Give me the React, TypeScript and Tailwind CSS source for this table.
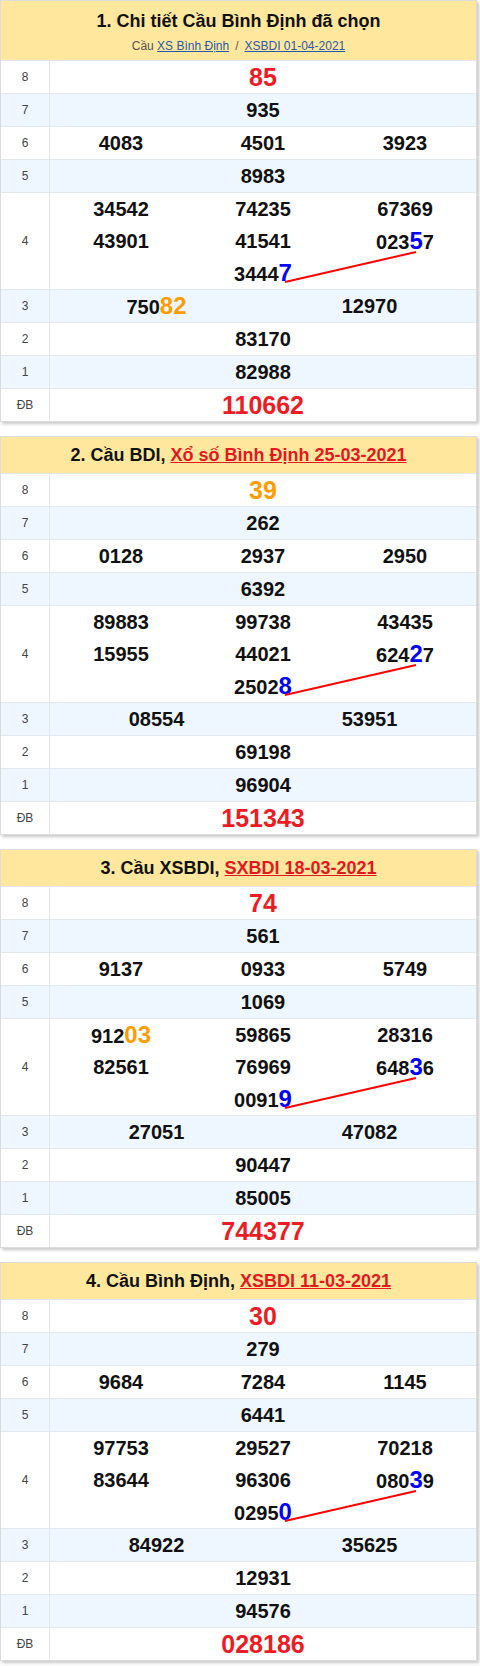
import React from 'react';

type Num = { v: string; hs?: number; he?: number; c?: 'r' | 'o' | 'b' };
type Row = { label: string; nums: Num[]; cols: number; alt?: boolean };
type Card = {
  title: string;
  link?: string;
  sub?: boolean;
  rows: Row[];
};

const colors = {
  r: 'text-[#ed1c24]',
  o: 'text-[#ff9c00]',
  b: 'text-[#0000ff]',
};

const n = (v: string): Num => ({ v });
const big = (v: string, c: 'r' | 'o'): Num => ({ v, c });
const hi = (v: string, hs: number, he: number, c: 'o' | 'b'): Num => ({ v, hs, he, c });

function makeRows(
  g8: Num,
  g7: string,
  g6: string[],
  g5: string,
  g4: Num[],
  g3: Num[],
  g2: string,
  g1: string,
  db: string
): Row[] {
  return [
    { label: '8', nums: [g8], cols: 1 },
    { label: '7', nums: [n(g7)], cols: 1, alt: true },
    { label: '6', nums: g6.map(n), cols: 3 },
    { label: '5', nums: [n(g5)], cols: 1, alt: true },
    { label: '4', nums: g4, cols: 3 },
    { label: '3', nums: g3, cols: 2, alt: true },
    { label: '2', nums: [n(g2)], cols: 1 },
    { label: '1', nums: [n(g1)], cols: 1, alt: true },
    { label: 'ĐB', nums: [big(db, 'r')], cols: 1 },
  ];
}

const cards: Card[] = [
  {
    title: '1. Chi tiết Cầu Bình Định đã chọn',
    sub: true,
    rows: makeRows(
      big('85', 'r'),
      '935',
      ['4083', '4501', '3923'],
      '8983',
      [n('34542'), n('74235'), n('67369'), n('43901'), n('41541'), hi('02357', 3, 4, 'b'), n(''), hi('34447', 4, 5, 'b'), n('')],
      [hi('75082', 3, 5, 'o'), n('12970')],
      '83170',
      '82988',
      '110662'
    ),
  },
  {
    title: '2. Cầu BDI, ',
    link: 'Xổ số Bình Định 25-03-2021',
    rows: makeRows(
      big('39', 'o'),
      '262',
      ['0128', '2937', '2950'],
      '6392',
      [n('89883'), n('99738'), n('43435'), n('15955'), n('44021'), hi('62427', 3, 4, 'b'), n(''), hi('25028', 4, 5, 'b'), n('')],
      [n('08554'), n('53951')],
      '69198',
      '96904',
      '151343'
    ),
  },
  {
    title: '3. Cầu XSBDI, ',
    link: 'SXBDI 18-03-2021',
    rows: makeRows(
      big('74', 'r'),
      '561',
      ['9137', '0933', '5749'],
      '1069',
      [hi('91203', 3, 5, 'o'), n('59865'), n('28316'), n('82561'), n('76969'), hi('64836', 3, 4, 'b'), n(''), hi('00919', 4, 5, 'b'), n('')],
      [n('27051'), n('47082')],
      '90447',
      '85005',
      '744377'
    ),
  },
  {
    title: '4. Cầu Bình Định, ',
    link: 'XSBDI 11-03-2021',
    rows: makeRows(
      big('30', 'r'),
      '279',
      ['9684', '7284', '1145'],
      '6441',
      [n('97753'), n('29527'), n('70218'), n('83644'), n('96306'), hi('08039', 3, 4, 'b'), n(''), hi('02950', 4, 5, 'b'), n('')],
      [n('84922'), n('35625')],
      '12931',
      '94576',
      '028186'
    ),
  },
];

function NumText({ num }: { num: Num }) {
  if (!num.c) return <span>{num.v}</span>;
  if (num.hs === undefined) {
    return <span className={`text-[25px] ${colors[num.c]}`}>{num.v}</span>;
  }
  return (
    <span>
      {num.v.slice(0, num.hs)}
      <span className={`text-[24px] ${colors[num.c]}`}>{num.v.slice(num.hs, num.he)}</span>
      {num.v.slice(num.he)}
    </span>
  );
}

function ResultRow({ row }: { row: Row }) {
  const grid = row.cols === 3 ? 'grid-cols-3' : row.cols === 2 ? 'grid-cols-2' : 'grid-cols-1';
  return (
    <div className={`flex border-t border-[#e3e8ee] ${row.alt ? 'bg-[#eef6ff]' : 'bg-white'}`}>
      <div className="w-[49px] shrink-0 border-r border-[#e3e8ee] flex items-center justify-center text-[12px] text-[#444]">
        {row.label}
      </div>
      <div className={`relative flex-1 grid ${grid}`}>
        {row.nums.map((num, i) => (
          <div key={i} className="h-[32px] leading-[32px] text-center text-[20px] font-bold text-[#111]">
            <NumText num={num} />
          </div>
        ))}
        {row.label === '4' && (
          <svg className="absolute inset-0 pointer-events-none" width="427" height="96">
            <line x1="235" y1="89" x2="366" y2="59" stroke="#ff0000" strokeWidth="2" />
          </svg>
        )}
      </div>
    </div>
  );
}

function ResultCard({ card }: { card: Card }) {
  return (
    <div className="mr-[3px] mb-[14px] border border-[#dcdcdc] bg-white shadow-[2px_2px_3px_rgba(0,0,0,0.22)]">
      {card.sub ? (
        <div className="h-[59px] bg-[#ffe89e] text-center pt-[7px]">
          <div className="text-[18px] leading-[26px] font-bold text-[#111]">{card.title}</div>
          <div className="mt-[2px] text-[12px] leading-[20px] text-[#555]">
            Cầu <a href="#" className="text-[#2b58a8] underline">XS Bình Định</a>
            <span className="mx-[6px]">/</span>
            <a href="#" className="text-[#2b58a8] underline">XSBDI 01-04-2021</a>
          </div>
        </div>
      ) : (
        <div className="h-[36px] bg-[#ffe89e] text-center text-[18px] leading-[36px] font-bold text-[#111]">
          {card.title}
          <a href="#" className="text-[#e3191f] underline">{card.link}</a>
        </div>
      )}
      {card.rows.map((row) => (
        <ResultRow key={row.label} row={row} />
      ))}
    </div>
  );
}

export default function App() {
  return (
    <div className="w-[480px] bg-white font-['Liberation_Sans',Arial,sans-serif]">
      {cards.map((card, i) => (
        <ResultCard key={i} card={card} />
      ))}
    </div>
  );
}
